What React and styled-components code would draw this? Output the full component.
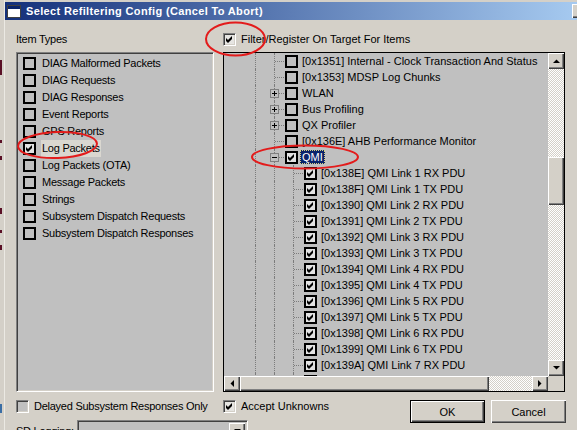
import React from "react";
import styled, { createGlobalStyle, css } from "styled-components";

const GlobalStyle = createGlobalStyle`
  html, body {
    margin: 0;
    padding: 0;
    background: #d4d0c8;
  }
  body {
    font-family: "Liberation Sans", Arial, sans-serif;
    font-size: 11px;
    color: #000;
  }
`;

const raised = css`
  background: #d4d0c8;
  box-shadow: inset 1px 1px #fff, inset -1px -1px #404040, inset -2px -2px #808080;
`;

const sunken = css`
  border-style: solid;
  border-width: 1px;
  border-color: #808080 #fff #fff #808080;
  box-shadow: inset 1px 1px #404040, inset -1px -1px #d4d0c8;
`;

const Screen = styled.div`
  position: relative;
  width: 577px;
  height: 430px;
  overflow: hidden;
  display: flex;
  background: #d4d0c8;
`;

const BackEdge = styled.div`
  width: 4px;
  flex: none;
  display: flex;
  flex-direction: column;
  border-right: 1px solid #ebe9e3;
`;

const Mark = styled.div`
  flex: none;
  width: 2px;
  height: ${(p) => p.$h}px;
  background: ${(p) => p.$c || "transparent"};
`;

const Dialog = styled.div`
  flex: 1;
  min-width: 0;
  display: flex;
  flex-direction: column;
`;

const TitleBar = styled.div`
  flex: none;
  height: 18px;
  margin-top: 2px;
  display: flex;
  align-items: center;
  gap: 5px;
  padding-left: 2px;
  background: linear-gradient(to right, #14307a, #a6caf0);
  color: #fff;
  font-weight: bold;
  letter-spacing: 0.35px;
  white-space: nowrap;
`;

const CloseBtn = styled.span`
  ${raised};
  margin-left: auto;
  margin-right: -11px;
  width: 16px;
  height: 14px;
  flex: none;
`;

const Body = styled.div`
  flex: 1;
  display: flex;
  gap: 9px;
  padding: 11px 0 0 11px;
`;

const Column = styled.div`
  width: ${(p) => p.$w}px;
  flex: none;
  display: flex;
  flex-direction: column;
  letter-spacing: ${(p) => p.$ls || 0}px;
`;

const Heading = styled.div`
  height: 16px;
  margin-bottom: 5px;
  display: flex;
  align-items: center;
  gap: 5px;
`;

const ListBox = styled.div`
  ${sunken};
  height: 340px;
  box-sizing: border-box;
  background: #c0c0c0;
  padding: 2px 0 0 6px;
`;

const ListRow = styled.div`
  height: 17px;
  display: flex;
  align-items: center;
  gap: 5px;
  white-space: nowrap;
`;

const FlatBox = styled.span`
  width: 13px;
  height: 13px;
  flex: none;
  box-sizing: border-box;
  border: 2px solid #000;
  margin-left: ${(p) => p.$ml || 0}px;
  background: ${(p) => (p.$checked ? "#e2e2e2" : "transparent")};
  display: flex;
  align-items: center;
  justify-content: center;
`;

const SunkenBox = styled.span`
  ${sunken};
  width: 13px;
  height: 13px;
  flex: none;
  box-sizing: border-box;
  background: ${(p) => (p.$checked ? "#e6e5e2" : "#c0c0c0")};
  display: flex;
  align-items: center;
  justify-content: center;
`;

const ItemLabel = styled.span`
  padding: 0 ${(p) => p.$pad}px;
  margin-left: ${(p) => p.$ml || 0}px;
  height: ${(p) => p.$h}px;
  line-height: ${(p) => p.$h}px;
  white-space: nowrap;
  ${(p) =>
    p.$sel === "soft" &&
    css`
      background: #dad7d0;
    `}
  ${(p) =>
    p.$sel === "focus" &&
    css`
      background: #0a246a;
      color: #fff;
      outline: 1px dotted #d8d080;
      outline-offset: -1px;
    `}
`;

const Tree = styled.div`
  width: 342px;
  height: 340px;
  box-sizing: border-box;
  border: 1px solid #000;
  background: #c0c0c0;
  display: flex;
  flex-direction: column;
`;

const TreeBody = styled.div`
  flex: 1;
  min-height: 0;
  display: flex;
`;

const TreeRows = styled.div`
  flex: 1;
  min-width: 0;
  overflow: hidden;
`;

const TreeRow = styled.div`
  height: 16px;
  display: flex;
  align-items: center;
  padding-left: 22px;
  white-space: nowrap;
`;

const Guide = styled.span`
  width: 19px;
  align-self: stretch;
  flex: none;
  display: grid;
  grid-template-columns: 9px 1px 9px;
  grid-template-rows: 8px 8px;
`;

const VLine = styled.span`
  grid-column: 2;
  grid-row: 1 / 3;
  border-left: 1px dotted #7c7c7c;
`;

const HLine = styled.span`
  grid-column: 3;
  grid-row: 2;
  border-top: 1px dotted #7c7c7c;
`;

const Toggle = styled.span`
  grid-column: 1 / 4;
  grid-row: 1 / 3;
  place-self: center;
  width: 9px;
  height: 9px;
  box-sizing: border-box;
  border: 1px solid #808080;
  background: #c0c0c0;
  display: flex;
  align-items: center;
  justify-content: center;
`;

const VScroll = styled.div`
  width: 16px;
  flex: none;
  display: flex;
  flex-direction: column;
`;

const HScroll = styled.div`
  height: 15px;
  flex: none;
  display: flex;
`;

const ScrollBtn = styled.div`
  ${raised};
  width: 16px;
  height: ${(p) => p.$h}px;
  flex: none;
  display: flex;
  align-items: center;
  justify-content: center;
`;

const Track = styled.div`
  flex: 1;
  display: flex;
  flex-direction: ${(p) => (p.$vertical ? "column" : "row")};
  background: repeating-conic-gradient(#fff 0 25%, #d4d0c8 0 50%) 0 0 / 2px 2px;
`;

const Thumb = styled.div`
  ${raised};
  flex: none;
  width: ${(p) => p.$w}px;
  height: ${(p) => p.$h}px;
  margin-top: ${(p) => p.$mt || 0}px;
`;

const Corner = styled.div`
  width: 16px;
  flex: none;
  background: #d4d0c8;
`;

const Footer = styled.div`
  margin-top: 6px;
  display: flex;
  flex-direction: ${(p) => (p.$stack ? "column" : "row")};
  align-items: flex-start;
`;

const CheckLine = styled.div`
  height: 16px;
  display: flex;
  align-items: center;
  gap: 5px;
  white-space: nowrap;
`;

const Buttons = styled.div`
  margin-left: auto;
  margin-top: 2px;
  display: flex;
  gap: 6px;
`;

const Button = styled.button`
  width: 75px;
  height: 23px;
  padding: 0;
  font: inherit;
  color: #000;
  box-sizing: border-box;
  ${raised};
  border: ${(p) => (p.$default ? "1px solid #000" : "none")};
`;

const ComboRow = styled.div`
  margin-top: 6px;
  display: flex;
  align-items: center;
  white-space: nowrap;
`;

const ComboLabel = styled.span`
  width: 61px;
  flex: none;
`;

const Combo = styled.div`
  ${sunken};
  width: 171px;
  height: 21px;
  flex: none;
  box-sizing: border-box;
  background: #c0c0c0;
  display: flex;
  justify-content: flex-end;
  padding: 2px;
`;

const Annotations = styled.svg`
  position: absolute;
  left: 0;
  top: 0;
  pointer-events: none;
`;

const Check = () => (
  <svg width="7" height="7" viewBox="0 0 7 7">
    <path d="M0 2 L2 4 L6 0 L6 3 L2 7 L0 5 Z" fill="#000" />
  </svg>
);

const Arrow = ({ dir }) => {
  const pts = {
    up: "0,4 7,4 3.5,0.5",
    down: "0,0 7,0 3.5,3.5",
    left: "4,0 4,7 0.5,3.5",
    right: "0,0 0,7 3.5,3.5",
  }[dir];
  const vertical = dir === "up" || dir === "down";
  return (
    <svg width={vertical ? 7 : 4} height={vertical ? 4 : 7}>
      <polygon points={pts} fill="#000" />
    </svg>
  );
};

const PlusMinus = ({ open }) => (
  <svg width="5" height="5" viewBox="0 0 5 5">
    <rect x="0" y="2" width="5" height="1" fill="#000" />
    {!open && <rect x="2" y="0" width="1" height="5" fill="#000" />}
  </svg>
);

const WindowIcon = () => (
  <svg width="14" height="13" viewBox="0 0 14 13">
    <rect x="0.5" y="0.5" width="13" height="12" fill="#fff" stroke="#404040" />
    <rect x="1" y="1" width="12" height="3" fill="#0a246a" />
  </svg>
);

const itemTypes = [
  "DIAG Malformed Packets",
  "DIAG Requests",
  "DIAG Responses",
  "Event Reports",
  "GPS Reports",
  "Log Packets",
  "Log Packets (OTA)",
  "Message Packets",
  "Strings",
  "Subsystem Dispatch Requests",
  "Subsystem Dispatch Responses",
];

const topNodes = [
  { label: "[0x1351] Internal - Clock Transaction And Status" },
  { label: "[0x1353] MDSP Log Chunks" },
  { label: "WLAN", toggle: "+" },
  { label: "Bus Profiling", toggle: "+" },
  { label: "QX Profiler", toggle: "+" },
  { label: "[0x136E] AHB Performance Monitor" },
];

const qmiLinks = Array.from({ length: 14 }, (_, i) => {
  const code = (0x138e + i).toString(16).toUpperCase();
  const link = Math.floor(i / 2) + 1;
  return `[0x${code}] QMI Link ${link} ${i % 2 ? "TX" : "RX"} PDU`;
});

const edgeMarks = [
  { h: 60 },
  { h: 15, c: "#5a1026" },
  { h: 65 },
  { h: 3, c: "#5a1026" },
  { h: 13 },
  { h: 4, c: "#5a1026" },
  { h: 48 },
  { h: 6, c: "#5a1026" },
  { h: 16 },
  { h: 3, c: "#5a1026" },
  { h: 12 },
  { h: 5, c: "#5a1026" },
  { h: 154 },
  { h: 9, c: "#3a6ea5" },
];

export default function App() {
  return (
    <>
      <GlobalStyle />
      <Screen>
        <BackEdge>
          {edgeMarks.map((m, i) => (
            <Mark key={i} $h={m.h} $c={m.c} />
          ))}
        </BackEdge>
        <Dialog>
          <TitleBar>
            <WindowIcon />
            Select Refiltering Config (Cancel To Abort)
            <CloseBtn />
          </TitleBar>
          <Body>
            <Column $w={198} $ls={-0.25}>
              <Heading>Item Types</Heading>
              <ListBox>
                {itemTypes.map((t) => {
                  const on = t === "Log Packets";
                  return (
                    <ListRow key={t}>
                      <FlatBox $checked={on}>{on && <Check />}</FlatBox>
                      <ItemLabel $pad={1} $h={17} $sel={on ? "soft" : undefined}>
                        {t}
                      </ItemLabel>
                    </ListRow>
                  );
                })}
              </ListBox>
              <Footer $stack>
                <CheckLine>
                  <SunkenBox />
                  Delayed Subsystem Responses Only
                </CheckLine>
                <ComboRow>
                  <ComboLabel>SD Logging:</ComboLabel>
                  <Combo>
                    <ScrollBtn $h={15}>
                      <Arrow dir="down" />
                    </ScrollBtn>
                  </Combo>
                </ComboRow>
              </Footer>
            </Column>
            <Column $w={343}>
              <Heading>
                <SunkenBox $checked>
                  <Check />
                </SunkenBox>
                Filter/Register On Target For Items
              </Heading>
              <Tree>
                <TreeBody>
                  <TreeRows>
                    {topNodes.map((n) => (
                      <TreeRow key={n.label}>
                        <Guide>
                          <VLine />
                        </Guide>
                        <Guide>
                          <VLine />
                          <HLine />
                          {n.toggle && (
                            <Toggle>
                              <PlusMinus />
                            </Toggle>
                          )}
                        </Guide>
                        <FlatBox $ml={1} />
                        <ItemLabel $pad={2} $ml={2} $h={14}>
                          {n.label}
                        </ItemLabel>
                      </TreeRow>
                    ))}
                    <TreeRow>
                      <Guide>
                        <VLine />
                      </Guide>
                      <Guide>
                        <VLine />
                        <HLine />
                        <Toggle>
                          <PlusMinus open />
                        </Toggle>
                      </Guide>
                      <FlatBox $ml={1} $checked>
                        <Check />
                      </FlatBox>
                      <ItemLabel $pad={2} $ml={2} $h={14} $sel="focus">
                        QMI
                      </ItemLabel>
                    </TreeRow>
                    {qmiLinks.map((label) => (
                      <TreeRow key={label}>
                        <Guide>
                          <VLine />
                        </Guide>
                        <Guide>
                          <VLine />
                        </Guide>
                        <Guide>
                          <VLine />
                          <HLine />
                        </Guide>
                        <FlatBox $ml={1} $checked>
                          <Check />
                        </FlatBox>
                        <ItemLabel $pad={2} $ml={2} $h={14}>
                          {label}
                        </ItemLabel>
                      </TreeRow>
                    ))}
                  </TreeRows>
                  <VScroll>
                    <ScrollBtn $h={16}>
                      <Arrow dir="up" />
                    </ScrollBtn>
                    <Track $vertical>
                      <Thumb $w={16} $h={48} $mt={88} />
                    </Track>
                    <ScrollBtn $h={16}>
                      <Arrow dir="down" />
                    </ScrollBtn>
                  </VScroll>
                </TreeBody>
                <HScroll>
                  <ScrollBtn $h={15}>
                    <Arrow dir="left" />
                  </ScrollBtn>
                  <Track>
                    <Thumb $w={249} $h={15} />
                  </Track>
                  <ScrollBtn $h={15}>
                    <Arrow dir="right" />
                  </ScrollBtn>
                  <Corner />
                </HScroll>
              </Tree>
              <Footer>
                <CheckLine>
                  <SunkenBox $checked>
                    <Check />
                  </SunkenBox>
                  Accept Unknowns
                </CheckLine>
                <Buttons>
                  <Button $default>OK</Button>
                  <Button>Cancel</Button>
                </Buttons>
              </Footer>
            </Column>
          </Body>
        </Dialog>
        <Annotations width="577" height="430">
          <g fill="none" stroke="#e31b1b" strokeWidth="2">
            <ellipse cx="235.5" cy="39" rx="29.5" ry="16.5" />
            <ellipse cx="57.5" cy="145" rx="39.5" ry="13" transform="rotate(-2 57.5 145)" />
            <ellipse cx="305" cy="157" rx="53" ry="11.5" />
          </g>
        </Annotations>
      </Screen>
    </>
  );
}
